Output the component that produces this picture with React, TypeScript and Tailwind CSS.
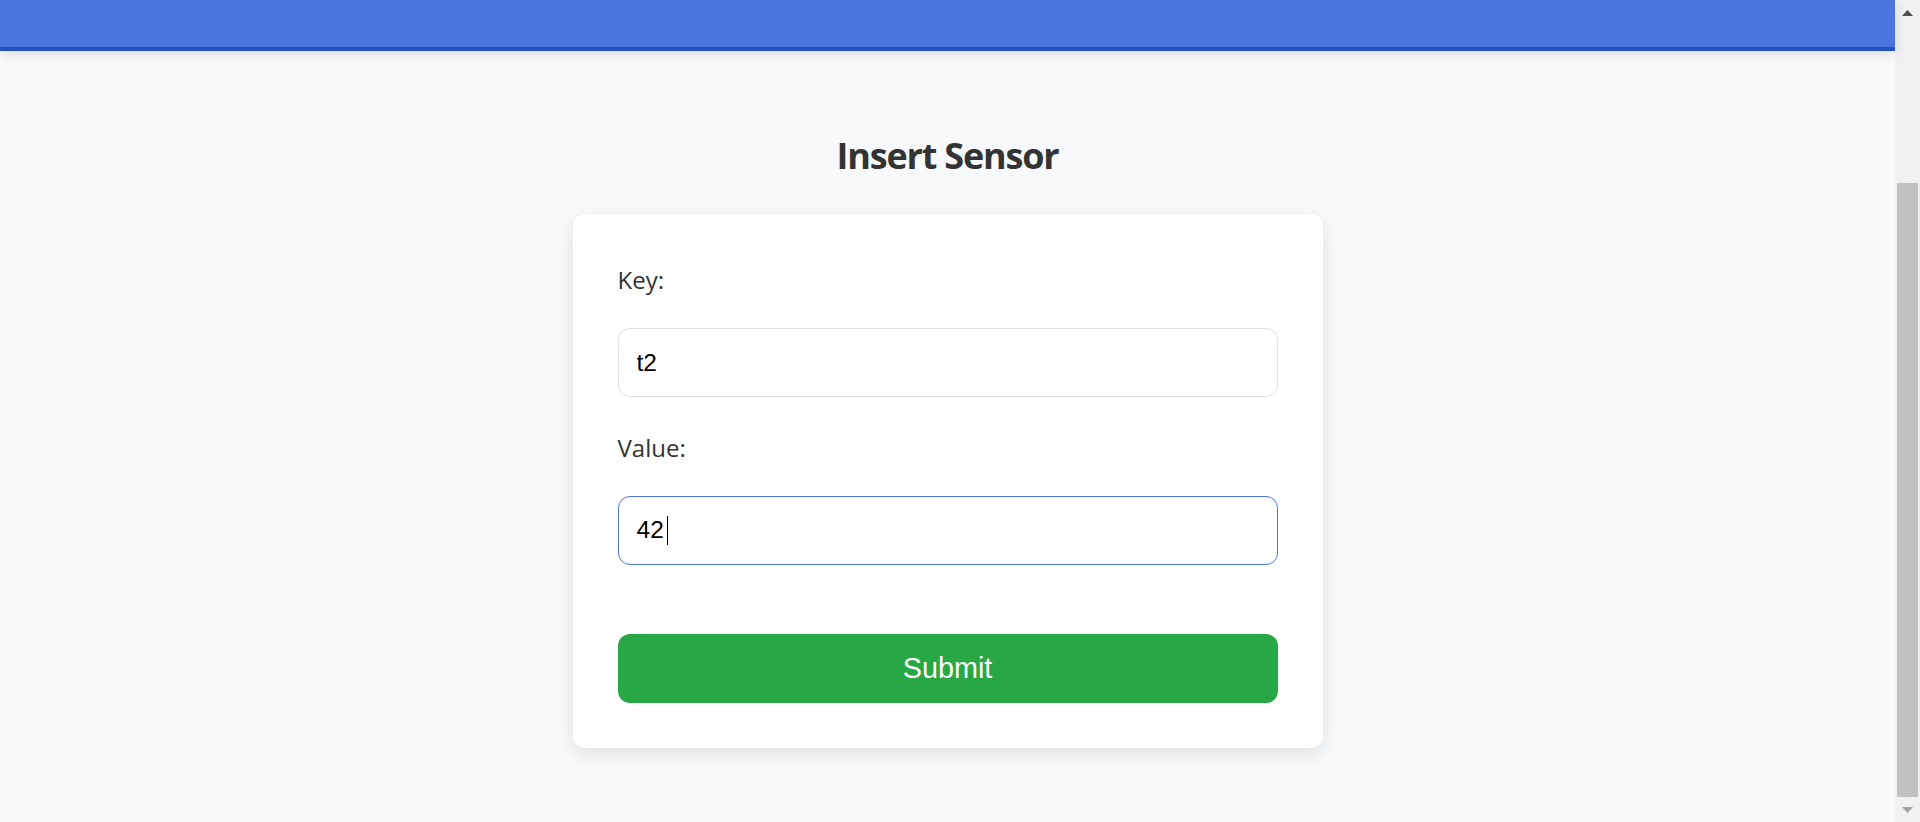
import React from "react";

const sans = { fontFamily: '"Open Sans", "Noto Sans", sans-serif' };
const arial = { fontFamily: '"Liberation Sans", Arial, sans-serif' };

function Scrollbar() {
  return (
    <div className="w-[25px] shrink-0 h-full bg-[#f1f1f1] flex flex-col">
      {/* up button */}
      <div className="h-[25px] flex items-center justify-center">
        <svg width="11" height="6" viewBox="0 0 11 6">
          <polygon points="5.5,0 11,6 0,6" fill="#505050" />
        </svg>
      </div>
      {/* track */}
      <div className="flex-1 flex flex-col justify-end px-[2px]">
        <div className="h-[614px] bg-[#c1c1c1]" />
      </div>
      {/* down button */}
      <div className="h-[25px] flex items-center justify-center">
        <svg width="11" height="6" viewBox="0 0 11 6">
          <polygon points="0,0 11,0 5.5,6" fill="#a3a3a3" />
        </svg>
      </div>
    </div>
  );
}

export default function App() {
  return (
    <div className="h-[822px] w-full flex overflow-hidden bg-[#f8f9fa]">
      <div className="flex-1 flex flex-col">
        {/* Header */}
        <header className="h-[51px] shrink-0 bg-[#4c75dd] border-b-4 border-[#2450c4] shadow-[0_3px_12px_rgba(0,0,0,0.12)] relative z-10" />

        {/* Main */}
        <main className="flex flex-col items-center">
          <h2
            className="mt-[87px] text-[36px] leading-[36px] font-bold text-[#333] tracking-[-1.2px]"
            style={sans}
          >
            Insert Sensor
          </h2>

          <form
            className="mt-[40px] w-[750px] bg-white rounded-[12px] p-[45px] shadow-[0_6px_18px_rgba(0,0,0,0.1)] flex flex-col"
            onSubmit={(e) => e.preventDefault()}
          >
            {/* Key field */}
            <div className="flex flex-col">
              <label className="text-[24px] leading-[42px] text-[#333]" style={sans}>
                Key:
              </label>
              <input
                type="text"
                defaultValue="t2"
                className="mt-[27px] h-[69px] w-full rounded-[12px] border border-[#dddddd] bg-white px-[18px] text-[24.5px] text-black outline-none"
                style={arial}
              />
            </div>

            {/* Value field (focused) */}
            <div className="flex flex-col mt-[30px]">
              <label className="text-[24px] leading-[42px] text-[#333]" style={sans}>
                Value:
              </label>
              <div
                className="mt-[27px] h-[69px] w-full rounded-[12px] border-[1.5px] border-[#4c75dd] bg-white px-[18px] flex items-center text-[24.5px] text-black"
                style={arial}
              >
                <span>42</span>
                <span className="w-px h-[29px] bg-black ml-[3px]" />
              </div>
            </div>

            <button
              type="submit"
              className="mt-[69px] h-[69px] w-full rounded-[12px] bg-[#28a745] text-white text-[28.8px]"
              style={arial}
            >
              Submit
            </button>
          </form>
        </main>
      </div>
      <Scrollbar />
    </div>
  );
}
